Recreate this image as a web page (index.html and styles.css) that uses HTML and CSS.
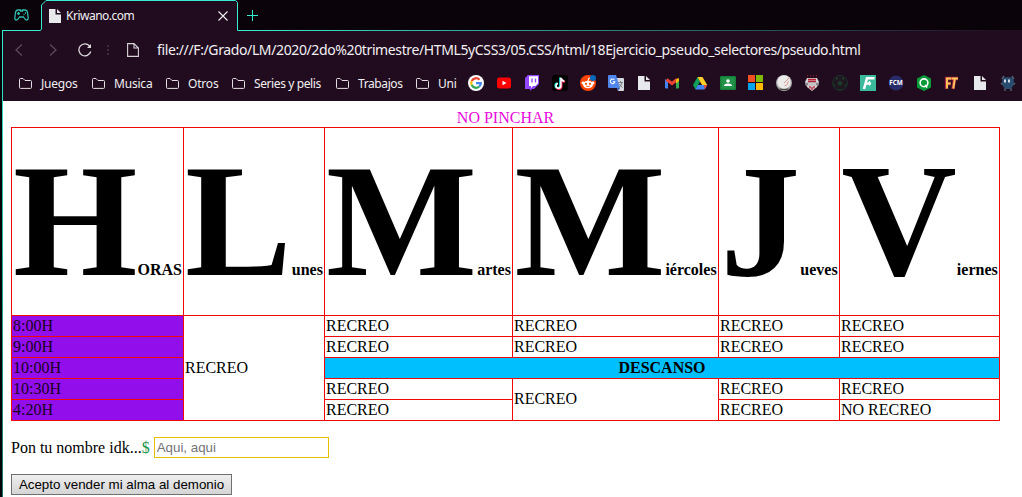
FILE: index.html
```
<!DOCTYPE html>
<html lang="es">
<head>
<meta charset="utf-8">
<title>Kriwano.com</title>
<link rel="stylesheet" href="styles.css">
</head>
<body>
<svg class="defs" width="0" height="0">
  <symbol id="folder" viewBox="0 0 13 11"><path d="M.5 9.500V1.500q0-1 1-1H4L6 2.500h5.500q1 0 1 1v6q0 .9-1 .9h-10q-1 0-1-.9z" fill="none" stroke="#e4dfe4"/></symbol>
  <symbol id="page" viewBox="0 0 16 16"><path d="M2 1H8.500V6.500H14V15H2zM10 1l4 4h-4z" fill="#e7e9ec"/></symbol>
</svg>
<div class="browser">
  <header class="tabs">
    <svg class="pad" viewBox="0 0 15 12" width="15" height="12"><path d="M4 1h2.500v1h2V1H11q2 0 2.500 2.500l.7 5.500q0 2-1.500 2T9.500 8h-4q-1.700 3-3.200 3T.8 9l.7-5.500Q2 1 4 1zM3 4.500h3M4.500 3v3M9.500 5.500h1M11 4h1" fill="none" stroke="#2fbcae" stroke-width="1.300"/></svg>
    <div class="tab">
      <svg width="16" height="16"><use href="#page"/></svg>
      <span class="title">Kriwano.com</span>
      <svg width="10" height="10" viewBox="0 0 10 10"><path d="M.5.5l9 9M9.500.5l-9 9" stroke="#eee" stroke-width="1.100"/></svg>
    </div>
    <svg class="plus" width="11" height="11" viewBox="0 0 11 11"><path d="M5.500 0v11M0 5.500h11" stroke="#35ead3"/></svg>
  </header>
  <nav class="address">
    <svg width="8" height="12" viewBox="0 0 8 12"><path d="M7 .5L1 6l6 5.500" fill="none" stroke="#5b4b5b" stroke-width="1.200"/></svg>
    <svg class="next" width="8" height="12" viewBox="0 0 8 12"><path d="M1 .5L7 6l-6 5.500" fill="none" stroke="#5b4b5b" stroke-width="1.200"/></svg>
    <svg class="reload" width="14" height="14" viewBox="0 0 14 14"><path d="M12.700 8.500A6 6 0 1 1 11.500 3L12 4" fill="none" stroke="#ddd8dd" stroke-width="1.300"/><path d="M13 1v4H9z" fill="#ddd8dd"/></svg>
    <svg width="2" height="10" viewBox="0 0 2 10"><path d="M0 0h2v2H0zM0 4h2v2H0zM0 8h2v2H0z" fill="#3c2c3b"/></svg>
    <svg class="doc" width="12" height="14" viewBox="0 0 12 14"><path d="M.6.6H7l4.400 4.400v8.400H.6zM7 .6V5h4.400" fill="none" stroke="#d8d3d8" stroke-width="1.100"/></svg>
    <span class="url">file:///F:/Grado/LM/2020/2do%20trimestre/HTML5yCSS3/05.CSS/html/18Ejercicio_pseudo_selectores/pseudo.html</span>
  </nav>
  <nav class="marks">
    <div class="folders">
      <span><svg width="13" height="11"><use href="#folder"/></svg>Juegos</span>
      <span><svg width="13" height="11"><use href="#folder"/></svg>Musica</span>
      <span><svg width="13" height="11"><use href="#folder"/></svg>Otros</span>
      <span class="tight"><svg width="13" height="11"><use href="#folder"/></svg>Series y pelis</span>
      <span class="tight"><svg width="13" height="11"><use href="#folder"/></svg>Trabajos</span>
      <span><svg width="13" height="11"><use href="#folder"/></svg>Uni</span>
    </div>
    <div class="icons">
      <svg viewBox="0 0 16 16"><circle cx="8" cy="8" r="8" fill="#fff"/><g fill="none" stroke-width="2.200"><path d="M3.700 6A4.800 4.800 0 0 1 11.500 4.700" stroke="#ea4335"/><path d="M3.700 10A4.800 4.800 0 0 1 3.700 6" stroke="#fbbc05"/><path d="M3.700 10A4.800 4.800 0 0 0 11.300 11.500" stroke="#34a853"/><path d="M11.300 11.500Q12.800 10 12.800 8.200H8" stroke="#4285f4"/></g></svg>
      <svg viewBox="0 0 16 16"><rect x="1" y="2.500" width="14" height="11" rx="2.500" fill="#f00"/><path d="M6.500 5.700v4.600l4-2.300z" fill="#fff"/></svg>
      <svg viewBox="0 0 16 16"><path d="M4 0h11v9l-5 5H8l-2 2v-2H1V3z" fill="#9146ff"/><path d="M5 1.200h9v7L11.500 11H9l-2 2v-2H5z" fill="#fff"/><path d="M8 3.500v4M11.500 3.500v4" stroke="#9146ff" stroke-width="1.400"/></svg>
      <svg viewBox="0 0 16 16"><rect width="16" height="16" rx="3" fill="#000"/><g fill="none" stroke-width="2"><path d="M8.200 2.500v8.200A2.400 2.400 0 1 1 5.500 8.200M8.200 3q.8 2.600 3.500 2.700" stroke="#25f4ee"/><path d="M9.500 3.300v8.100A2.400 2.400 0 0 1 4.700 12M9.500 4q.8 2.600 3.500 2.700" stroke="#fe2c55"/><path d="M8.900 2.800v8.200A2.400 2.400 0 1 1 6 8.500M8.900 3q.8 2.900 3.500 3.200" stroke="#fff" stroke-width="1.500"/></g></svg>
      <svg viewBox="0 0 16 16"><circle cx="8" cy="8" r="8" fill="#ff4500"/><ellipse cx="8" cy="9.500" rx="5" ry="3.800" fill="#fff"/><circle cx="3" cy="8" r="1.400" fill="#fff"/><circle cx="13" cy="8" r="1.400" fill="#fff"/><path d="M8 6l.8-3 2.500.5" fill="none" stroke="#fff"/><circle cx="6" cy="8.800" r="1.100" fill="#ff4500"/><circle cx="10" cy="8.800" r="1.100" fill="#ff4500"/><path d="M6 11q2 1.200 4 0" fill="none" stroke="#ff4500" stroke-width=".8"/><circle cx="13" cy="3" r="3" fill="#0869bd"/></svg>
      <svg viewBox="0 0 16 16"><path d="M6 3h9q1 0 1 1v11q0 1-1 1H10z" fill="#d5d8dc"/><path d="M1 0h7l4 13H1q-1 0-1-1V1q0-1 1-1z" fill="#4f87ee"/><path d="M9 13h3l-2 3z" fill="#3659b5"/><path d="M6.300 4.700A2.300 2.300 0 1 0 6.900 6.700H4.800" fill="none" stroke="#fff" stroke-width="1.100"/><path d="M10 7.500H15M12.500 6V7.500M14 7.500q-.7 3-3 5M11.500 9q1 2.500 3 3.500" fill="none" stroke="#687580" stroke-width=".9"/></svg>
      <svg viewBox="0 0 16 16"><use href="#page"/></svg>
      <svg viewBox="0 0 16 16"><path d="M1 4l3 2v7.500H2q-1 0-1-1z" fill="#4285f4"/><path d="M12 6l3-2v8.500q0 1-1 1h-2z" fill="#34a853"/><path d="M2.500 4.500L8 8.500 13 4.500" fill="none" stroke="#ea4335" stroke-width="3"/><path d="M12 4.500q3-3 3 0V6l-3 2.500z" fill="#fbbc04"/></svg>
      <svg viewBox="0 0 16 16"><path d="M5.500 2L8 6.500 3.500 14.500 1 10z" fill="#0f9d58"/><path d="M5.500 2h5l4.700 8H10z" fill="#ffcf29"/><path d="M5.800 10h9.400l-2.700 4.500h-9z" fill="#4285f4"/><path d="M12 10h3.200l-2.500 4.500z" fill="#ea4335"/></svg>
      <svg viewBox="0 0 16 16"><rect y="1" width="16" height="14" rx="1" fill="#188038"/><rect x="1.500" y="2.500" width="13" height="11" fill="#22934b"/><circle cx="8" cy="6" r="1.800" fill="#fff"/><path d="M4 11q0-2.500 4-2.500t4 2.500z" fill="#fff"/></svg>
      <svg viewBox="0 0 16 16"><path d="M0 0h7v7H0z" fill="#f25022"/><path d="M8 0h7v7H8z" fill="#7fba00"/><path d="M0 8h7v7H0z" fill="#00a4ef"/><path d="M8 8h7v7H8z" fill="#ffb900"/></svg>
      <svg viewBox="0 0 16 16"><circle cx="8" cy="8" r="8" fill="#aaa9aa"/><circle cx="8" cy="7" r="6.800" fill="#edeaea"/><path d="M8 8l5-5M8.500 11q3 0 4-5" fill="none" stroke="#c77" stroke-width=".7"/><path d="M3 13q5 2 10 0l-2 2H5z" fill="#444"/></svg>
      <svg viewBox="0 0 16 16"><path d="M3 3h10l2 4-2 5-5 4-5-4-2-5z" fill="#d8d4d6"/><path d="M3 .8h1M6 .8h1M9 .8h1M12 .8h1" stroke="#b51f31"/><path d="M4 4.500h8M4 6.500h8M6 11v2.500M10 11v2.500M8 12v3" stroke="#b51f31" stroke-width="1.300"/><path d="M1 9h14" stroke="#88858a" stroke-width="2.500"/><path d="M4 9h8" stroke="#eee" stroke-width="1.200"/></svg>
      <svg viewBox="0 0 16 16"><circle cx="8" cy="8" r="7.500" fill="#21151f" stroke="#19332a"/><path d="M8 5.500l2.600 1.900-1 3.100H6.400l-1-3.100zM4 2l3 1.500L4 5.500zM12 2L9 3.500l3 2zM1 8l2.500 1.500L3 12.500zM15 8l-2.500 1.500.5 3zM6 14h4l-2 1.500z" fill="#1b3a29"/></svg>
      <svg viewBox="0 0 16 16"><path d="M0 0h16v16H0z" fill="#3ab99d"/><path d="M4 14L7 3.200H14.500M5.500 8.500h5.500" fill="none" stroke="#fff" stroke-width="2.500"/><path d="M9.500 6v4.500" stroke="#fff" stroke-width="1.200"/></svg>
      <svg viewBox="0 0 16 16"><circle cx="8" cy="8" r="7.500" fill="#282b69"/><text x="8" y="10.200" text-anchor="middle" textLength="13.500" lengthAdjust="spacingAndGlyphs" font-size="6.200" font-weight="700" fill="#fff">FCM</text></svg>
      <svg viewBox="0 0 16 16"><path d="M8 0l7 3.500v9L8 16l-7-3.500v-9z" fill="#099b37"/><circle cx="8" cy="7.800" r="3.900" fill="none" stroke="#fff" stroke-width="1.600"/><path d="M9 10l2.200 2.500" stroke="#fff" stroke-width="1.600"/></svg>
      <svg viewBox="0 0 16 16"><path d="M2.500 14V3.500H8M3 8.500h4M7 3.500h7M10.500 4L9 14" fill="none" stroke="#a92645" stroke-width="3.300"/><path d="M3 13.500V3.500h4M3 8.500h3.500M7.500 3.500H14M10.800 4L9.300 13.500" fill="none" stroke="#ffc857" stroke-width="1.900"/></svg>
      <svg viewBox="0 0 16 16"><use href="#page"/></svg>
      <svg viewBox="0 0 16 16"><path d="M2 4l2-3M14 4l-2-3M1 8l2 2M15 8l-2 2M5 13v3M11 13v3" stroke="#51606f" stroke-width="1.500"/><path d="M3 3q5-2 10 0l1 4-1.500 5-2.500 2H6l-2.500-2L2 7z" fill="#294d70"/><path d="M5 4.500v3M9 4.500v3" stroke="#fff" stroke-width="1.600"/></svg>
    </div>
  </nav>
  <svg class="outline" width="1022" height="497" viewBox="0 0 1022 497">
    <defs>
      <linearGradient id="gx" gradientUnits="userSpaceOnUse" x1="240" y1="0" x2="1010" y2="0"><stop stop-color="#37ecd5"/><stop offset="1" stop-color="#200c1e"/></linearGradient>
      <linearGradient id="gy" gradientUnits="userSpaceOnUse" x1="0" y1="30" x2="0" y2="497"><stop stop-color="#37ecd5"/><stop offset="1" stop-color="#167468"/></linearGradient>
    </defs>
    <path d="M2.500 497V30" stroke="url(#gy)"/>
    <path d="M2 30.500H40.500L41.500 29V5L46 .5H235.500L237.500 2.500V30.500H1022" fill="none" stroke="url(#gx)"/>
  </svg>
</div>
<main class="content">
  <table class="schedule">
    <caption>NO PINCHAR</caption>
    <colgroup><col class="c1"><col class="c2"><col class="c3"><col class="c4"><col class="c5"><col class="c6"></colgroup>
    <tr class="days"><th>HORAS</th><th>Lunes</th><th>Martes</th><th>Miércoles</th><th>Jueves</th><th>Viernes</th></tr>
    <tr><td class="hour">8:00H</td><td rowspan="5">RECREO</td><td>RECREO</td><td>RECREO</td><td>RECREO</td><td>RECREO</td></tr>
    <tr><td class="hour">9:00H</td><td>RECREO</td><td>RECREO</td><td>RECREO</td><td>RECREO</td></tr>
    <tr><td class="hour">10:00H</td><th class="rest" colspan="4">DESCANSO</th></tr>
    <tr><td class="hour">10:30H</td><td>RECREO</td><td class="double" rowspan="2">RECREO</td><td>RECREO</td><td>RECREO</td></tr>
    <tr><td class="hour">4:20H</td><td>RECREO</td><td>RECREO</td><td>NO RECREO</td></tr>
  </table>
  <form class="form">
    <div class="field"><label class="name" for="n">Pon tu nombre idk...</label><input id="n" class="box" type="text" placeholder="Aqui, aqui"></div>
    <button class="send" type="button">Acepto vender mi alma al demonio</button>
  </form>
</main>
</body>
</html>
```
FILE: styles.css
```
* { box-sizing: border-box; }
body { margin: 0; width: 1022px; height: 497px; overflow: hidden; background: linear-gradient(90deg, #030507 2px, #fff 2px); font: 16px "Liberation Serif", serif; color: #000; }
svg { display: block; flex: none; }
.defs { position: absolute; }
.browser { height: 101px; padding-left: 3px; font-family: "Noto Sans", "Open Sans", sans-serif; color: #f2eff2; }
.outline { position: absolute; left: 0; top: 0; pointer-events: none; }
.tabs { display: flex; align-items: center; height: 30px; margin-left: -3px; background: #0a0309; }
.pad { margin: 0 12px 0 14px; }
.tab { display: flex; align-items: center; width: 197px; height: 30px; padding: 1px 10px 0 6px; background: #200c1e; clip-path: polygon(0 5px, 5px 0, 100% 0, 100% 100%, 0 100%); }
.title { flex: 1; margin-left: 3px; font-size: 12px; letter-spacing: -.5px; white-space: nowrap; }
.plus { margin-left: 9px; }
.address { display: flex; align-items: center; height: 37px; padding: 2px 0 0 12px; background: #200c1e; }
.next { margin-left: 26px; }
.reload { margin: 0 15px 0 21px; }
.doc { margin-left: 18px; }
.url { margin-left: 18px; font-size: 14px; letter-spacing: -.38px; white-space: nowrap; }
.marks { display: flex; align-items: center; height: 34px; padding: 0 0 2px 16px; background: #200c1e; }
.folders { display: grid; grid-template-columns: 73px 74px 66px 104px 80px 52px; font-size: 12px; letter-spacing: -.2px; }
.folders span { display: flex; align-items: center; gap: 9px; white-space: nowrap; }
.folders .tight { letter-spacing: -.4px; }
.icons { display: flex; gap: 12px; }
.icons svg { width: 16px; height: 16px; }
.content { padding: 8px 8px 0 11px; }
.schedule { width: 989px; table-layout: fixed; border-collapse: collapse; }
.schedule caption { height: 18px; line-height: 18px; padding: 0; color: #e80bdc; }
.schedule th, .schedule td { height: 21px; padding: 1px; border: 1px solid #f00808; line-height: 18px; white-space: nowrap; }
.schedule .days th { height: 188px; line-height: normal; }
.days th::first-letter { font-size: 160px; }
.schedule .double { padding-bottom: 3px; }
.c1 { width: 172px; } .c2 { width: 141px; } .c3 { width: 188px; } .c4 { width: 206px; } .c5 { width: 121px; } .c6 { width: 160px; }
.schedule .hour { background: #920eeb; color: #180323; }
.schedule .rest { background: #00bfff; }
.form { display: flex; flex-direction: column; align-items: flex-start; gap: 16px; margin-top: 16px; }
.field { display: flex; align-items: center; height: 21px; }
.name::after { content: "$"; color: #159447; }
.box { width: 175px; height: 21px; margin-left: 4px; padding: 1px 2px; border: 1px solid #e6bf00; font: 13.333px "Liberation Sans", sans-serif; }
.box::placeholder { color: #757575; }
.send { width: 221px; height: 21px; padding: 0 6px; border: 1px solid #707070; background: linear-gradient(#eee, #d5d5d5); color: #000; font: 13.333px "Liberation Sans", sans-serif; white-space: nowrap; }
```
